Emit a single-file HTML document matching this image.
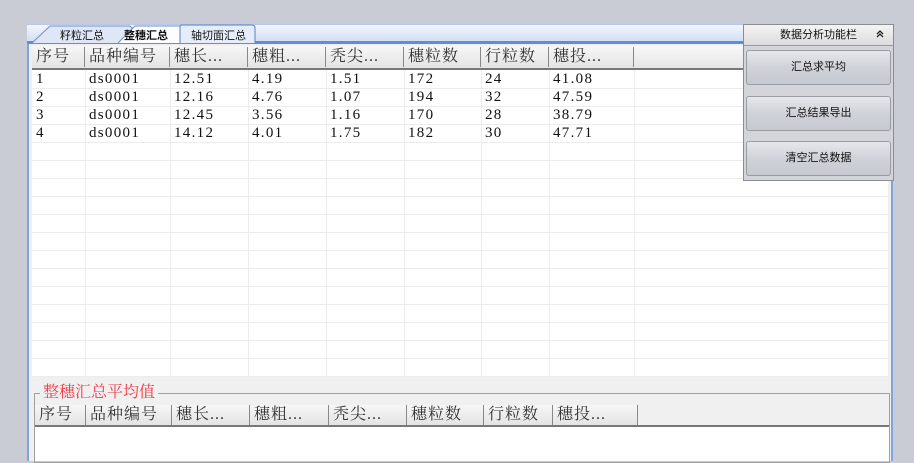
<html><head><style>
body{margin:0;width:914px;height:461px;background:#c9ccd4;position:relative;overflow:hidden;font-family:"Liberation Serif","Noto Serif CJK SC",serif}
.a{position:absolute}
.s{font-family:"Liberation Sans","Noto Sans CJK SC",sans-serif;font-size:11px;color:#111}
.hd{position:absolute;height:20px;background:linear-gradient(#f6f6f6,#e4e4e4);border-right:1px solid #888;font-size:16px;line-height:20px;padding-left:4px;color:#333;box-sizing:border-box;white-space:nowrap;letter-spacing:1px}
.c{position:absolute;font-size:15px;line-height:18px;color:#111;padding-left:4px;letter-spacing:1.3px}
.vl{position:absolute;width:1px;background:#ececec}
.hl{position:absolute;height:1px;background:#ececec}
.btn{position:absolute;left:746px;width:145px;height:35px;border:1px solid #9a9ca4;border-radius:3px;background:linear-gradient(#e6e7ec,#d0d2d9 50%,#c7c9d1);box-sizing:border-box;text-align:center;line-height:33px}
</style></head><body>
<div class="a" style="left:27px;top:24px;width:866px;height:18px;background:linear-gradient(#f2f6fd,#cfdcf3);border-top:1px solid #b8c8e8"></div>
<div class="a" style="left:27px;top:41px;width:866px;height:3px;background:#5b8fd9"></div>
<svg class="a" style="left:30px;top:24px" width="230" height="20">
<path d="M2 19 L20 2 H100 L110 12 V19" fill="#dfe7f7" stroke="#6f8fc4"/>
<path d="M88 19 L105 2 H175 L180 7 V19" fill="#fdfdff" stroke="#6f8fc4"/>
<path d="M150 19 V3 Q150 1 152 1 H222 Q225 1 225 4 V19" fill="#e6edfa" stroke="#5b7fc0"/>
</svg>
<div class="a s" style="left:60px;top:27px">籽粒汇总</div>
<div class="a s" style="left:124px;top:27px;font-weight:bold">整穗汇总</div>
<div class="a s" style="left:191px;top:27px">轴切面汇总</div>
<div class="a" style="left:27px;top:44px;width:866px;height:417px;background:#f0f0f0;border-left:2px solid #7fa4dc;border-right:2px solid #7fa4dc;box-sizing:border-box"></div>
<div class="a" style="left:32px;top:46px;width:856px;height:331px;background:#fff"></div>
<div class="a" style="left:32px;top:46px;width:856px;height:22px;background:linear-gradient(#f8f8f8,#e6e6e6);border-bottom:2px solid #777"></div>
<div class="hd" style="left:32px;top:47px;width:53px">序号</div>
<div class="hd" style="left:85px;top:47px;width:85px">品种编号</div>
<div class="hd" style="left:170px;top:47px;width:78px">穗长...</div>
<div class="hd" style="left:248px;top:47px;width:78px">穗粗...</div>
<div class="hd" style="left:326px;top:47px;width:78px">秃尖...</div>
<div class="hd" style="left:404px;top:47px;width:77px">穗粒数</div>
<div class="hd" style="left:481px;top:47px;width:68px">行粒数</div>
<div class="hd" style="left:549px;top:47px;width:85px">穗投...</div>
<div class="vl" style="left:85px;top:70px;height:307px"></div>
<div class="vl" style="left:170px;top:70px;height:307px"></div>
<div class="vl" style="left:248px;top:70px;height:307px"></div>
<div class="vl" style="left:326px;top:70px;height:307px"></div>
<div class="vl" style="left:404px;top:70px;height:307px"></div>
<div class="vl" style="left:481px;top:70px;height:307px"></div>
<div class="vl" style="left:549px;top:70px;height:307px"></div>
<div class="vl" style="left:634px;top:70px;height:307px"></div>
<div id="rows"></div>
<script>
var h='';for(var y=88;y<377;y+=18)h+='<div class="hl" style="left:32px;top:'+y+'px;width:856px"></div>';
var d=[["1","ds0001","12.51","4.19","1.51","172","24","41.08"],["2","ds0001","12.16","4.76","1.07","194","32","47.59"],["3","ds0001","12.45","3.56","1.16","170","28","38.79"],["4","ds0001","14.12","4.01","1.75","182","30","47.71"]];
var xs=[32,85,170,248,326,404,481,549];
d.forEach(function(r,i){r.forEach(function(t,j){h+='<div class="c" style="left:'+xs[j]+'px;top:'+(70+i*18)+'px">'+t+'</div>'})});
var gx=[34,86,172,250,329,407,484,553,638];
for(var y=445;y<461;y+=18)h+='<div class="hl" style="left:35px;top:'+y+'px;width:854px"></div>';
for(var j=1;j<gx.length;j++)h+='<div class="vl" style="left:'+gx[j]+'px;top:427px;height:34px"></div>';
document.getElementById('rows').innerHTML=h;
</script>
<div class="a" style="left:34px;top:393px;width:856px;height:70px;border:1px solid #a0a0a0;box-sizing:border-box"></div>
<div class="a" style="left:35px;top:427px;width:854px;height:34px;background:#fff"></div>
<div class="a" style="left:35px;top:404px;width:854px;height:23px;border-bottom:2px solid #777;box-sizing:border-box"></div>
<div class="a" style="left:40px;top:383px;background:#f0f0f0;padding:0 3px;color:#f03c4a;font-size:16px;line-height:20px">整穗汇总平均值</div>
<div class="hd" style="left:35px;top:405px;width:51px">序号</div>
<div class="hd" style="left:86px;top:405px;width:86px">品种编号</div>
<div class="hd" style="left:172px;top:405px;width:78px">穗长...</div>
<div class="hd" style="left:250px;top:405px;width:79px">穗粗...</div>
<div class="hd" style="left:329px;top:405px;width:78px">秃尖...</div>
<div class="hd" style="left:407px;top:405px;width:77px">穗粒数</div>
<div class="hd" style="left:484px;top:405px;width:69px">行粒数</div>
<div class="hd" style="left:553px;top:405px;width:85px">穗投...</div>
<div class="a" style="left:743px;top:24px;width:151px;height:157px;background:#d4d5da;border:1px solid #8a8c92;box-sizing:border-box"></div>
<div class="a s" style="left:744px;top:25px;width:149px;height:20px;background:linear-gradient(#f4f4f4,#dcdcdc);border-bottom:1px solid #999;text-align:center;line-height:20px">数据分析功能栏</div>
<svg class="a" style="left:876px;top:30px" width="8" height="8"><path d="M1 4 L4 1 L7 4 M1 7 L4 4 L7 7" fill="none" stroke="#222" stroke-width="1.3"/></svg>
<div class="btn s" style="top:50px">汇总求平均</div>
<div class="btn s" style="top:96px">汇总结果导出</div>
<div class="btn s" style="top:141px">清空汇总数据</div>
</body></html>
